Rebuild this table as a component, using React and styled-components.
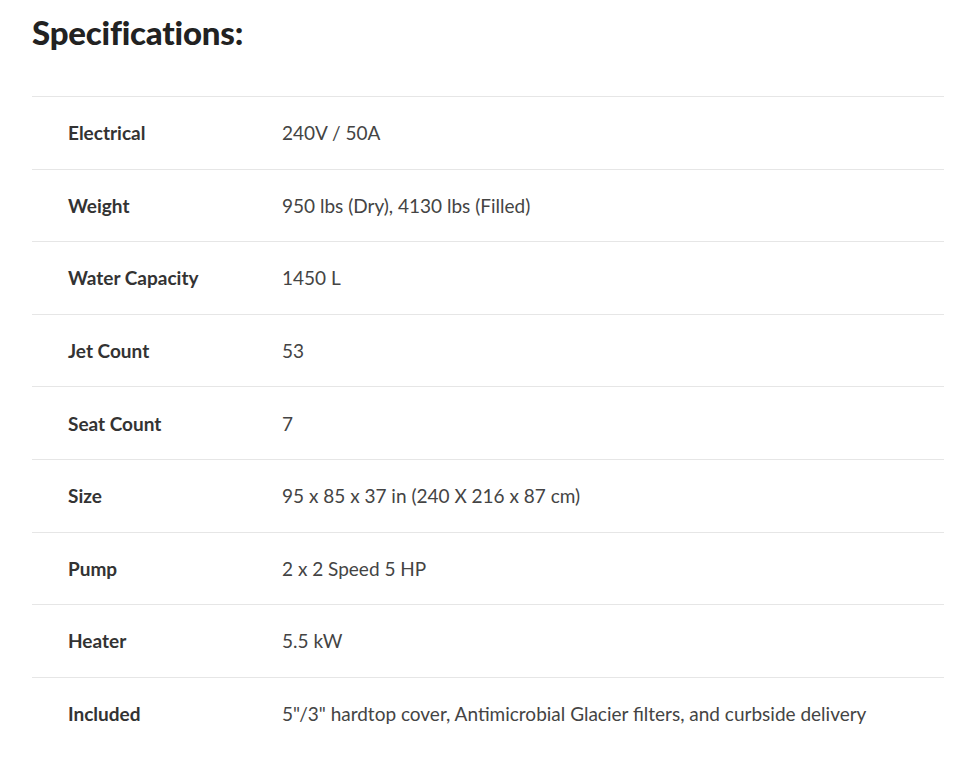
import React from 'react';
import styled, { createGlobalStyle } from 'styled-components';

const GlobalStyle = createGlobalStyle`
  body {
    margin: 0;
    background: #fff;
    font-family: Lato, 'Open Sans', sans-serif;
  }
`;

// Design
const Wrapper = styled.section`
  padding: 12px 32px 0 32px;
  width: 912px;
`;

const Title = styled.h2`
  margin: 0 0 44px 0;
  font-size: 33px;
  line-height: 40px;
  font-weight: 900;
  color: #222;
  letter-spacing: -0.2px;
`;

const Table = styled.table`
  width: 100%;
  border-collapse: collapse;
`;

const Row = styled.tr`
  border-top: 1px solid #e6e6e6;
  height: 72.6px;
`;

const Label = styled.td`
  width: 214px;
  padding: 0 0 0 36px;
  font-size: 19px;
  font-weight: 700;
  color: #333;
  vertical-align: middle;
`;

const Value = styled.td`
  padding: 0;
  font-size: 19px;
  color: #444;
  vertical-align: middle;
`;

const specs = [
  ['Electrical', '240V / 50A'],
  ['Weight', '950 lbs (Dry), 4130 lbs (Filled)'],
  ['Water Capacity', '1450 L'],
  ['Jet Count', '53'],
  ['Seat Count', '7'],
  ['Size', '95 x 85 x 37 in (240 X 216 x 87 cm)'],
  ['Pump', '2 x 2 Speed 5 HP'],
  ['Heater', '5.5 kW'],
  ['Included', '5"/3" hardtop cover, Antimicrobial Glacier filters, and curbside delivery']
];

const App = () => (
  <Wrapper>
    <GlobalStyle />
    <Title>Specifications:</Title>
    <Table>
      <tbody>
        {specs.map(([label, value]) => (
          <Row key={label}>
            <Label>{label}</Label>
            <Value>{value}</Value>
          </Row>
        ))}
      </tbody>
    </Table>
  </Wrapper>
);

export default App;
